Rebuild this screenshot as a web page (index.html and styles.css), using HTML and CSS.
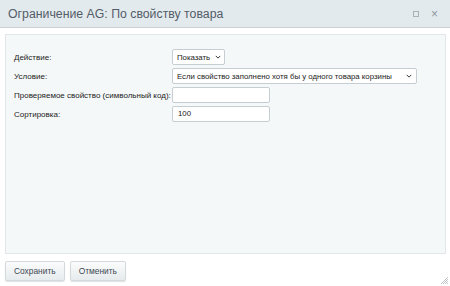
FILE: index.html
```html
<!DOCTYPE html>
<html lang="ru">
<head>
<meta charset="utf-8">
<link rel="stylesheet" href="styles.css">
</head>
<body>
<div class="dialog">
  <div class="head">
    <span class="title">Ограничение AG: По свойству товара</span>
    <div class="head-icons">
      <span class="ico-max"></span>
      <span class="ico-close">×</span>
    </div>
  </div>
  <div class="content">
    <div class="panel">
      <div class="row">
        <div class="label">Действие:</div>
        <div class="field"><div class="select sel-small"><span>Показать</span><svg class="chev" viewBox="0 0 8 5" width="6" height="4"><path d="M1 1l3 3 3-3" fill="none" stroke="#333" stroke-width="1.3"/></svg></div></div>
      </div>
      <div class="row">
        <div class="label">Условие:</div>
        <div class="field"><div class="select sel-wide"><span>Если свойство заполнено хотя бы у одного товара корзины</span><svg class="chev" viewBox="0 0 8 5" width="6" height="4"><path d="M1 1l3 3 3-3" fill="none" stroke="#333" stroke-width="1.3"/></svg></div></div>
      </div>
      <div class="row">
        <div class="label">Проверяемое свойство (символьный код):</div>
        <div class="field"><div class="input"></div></div>
      </div>
      <div class="row">
        <div class="label">Сортировка:</div>
        <div class="field"><div class="input">100</div></div>
      </div>
    </div>
  </div>
  <div class="foot">
    <button class="btn">Сохранить</button>
    <button class="btn">Отменить</button>
  </div>
  <svg class="grip" viewBox="0 0 9 9" width="9" height="9"><g fill="#c4c9cc"><rect x="7" y="1" width="1" height="1"/><rect x="6" y="2" width="1" height="1"/><rect x="5" y="3" width="1" height="1"/><rect x="7" y="3" width="1" height="1"/><rect x="4" y="4" width="1" height="1"/><rect x="6" y="4" width="1" height="1"/><rect x="3" y="5" width="1" height="1"/><rect x="5" y="5" width="1" height="1"/><rect x="7" y="5" width="1" height="1"/><rect x="2" y="6" width="1" height="1"/><rect x="4" y="6" width="1" height="1"/><rect x="6" y="6" width="1" height="1"/><rect x="1" y="7" width="1" height="1"/><rect x="3" y="7" width="1" height="1"/><rect x="5" y="7" width="1" height="1"/><rect x="7" y="7" width="1" height="1"/></g></svg>
</div>
</body>
</html>
```
FILE: styles.css
```css
html, body { margin: 0; padding: 0; background: #fff; }
body { width: 450px; height: 286px; overflow: hidden; font-family: "Liberation Sans", Arial, sans-serif; }
.dialog { position: relative; width: 450px; height: 286px; display: flex; flex-direction: column; }
.head { height: 28px; box-sizing: border-box; background: #e3eaed; border-bottom: 1px solid #c9d1d4; display: flex; align-items: center; justify-content: space-between; padding: 0 12px 0 8px; }
.title { font-size: 12.3px; color: #535c69; }
.head-icons { display: flex; align-items: center; gap: 12px; }
.ico-max { width: 4px; height: 4px; border: 1px solid #a9b1b6; }
.ico-close { font-size: 12px; color: #8f989e; line-height: 1; }
.content { padding: 6px 4px 0 5px; }
.panel { height: 220px; box-sizing: border-box; background: #f5f8f9; border: 1px solid #e2e8ea; padding: 14px 8px 0 8px; display: flex; flex-direction: column; gap: 3px; }
.row { display: flex; align-items: center; }
.label { width: 158px; font-size: 8px; color: #222; white-space: nowrap; }
.field { display: flex; }
.select { box-sizing: border-box; height: 16px; background: #fff; border: 1px solid #c6cdd3; border-radius: 2px; display: flex; align-items: center; justify-content: space-between; gap: 5px; padding: 0 4px 0 4px; font-size: 7.8px; color: #222; white-space: nowrap; }
.sel-small { padding-right: 3px; }
.sel-wide { width: 245px; }
.chev { display: block; flex: none; }
.input { box-sizing: border-box; width: 98px; height: 16px; background: #fff; border: 1px solid #c6cdd3; border-radius: 2px; padding: 0 5px; font-size: 7.8px; color: #222; line-height: 14px; }
.foot { display: flex; gap: 5px; padding: 7px 5px 0 5px; }
.btn { height: 20px; padding: 0 8px; font-family: "Liberation Sans", Arial, sans-serif; font-size: 8.4px; color: #3e4954; background: linear-gradient(#fbfcfc, #e6ebed); border: 1px solid #d3d9dc; border-radius: 2px; box-shadow: 0 1px 1px rgba(0,0,0,0.12); }
.grip { position: absolute; right: 1px; bottom: 1px; display: block; }
```
